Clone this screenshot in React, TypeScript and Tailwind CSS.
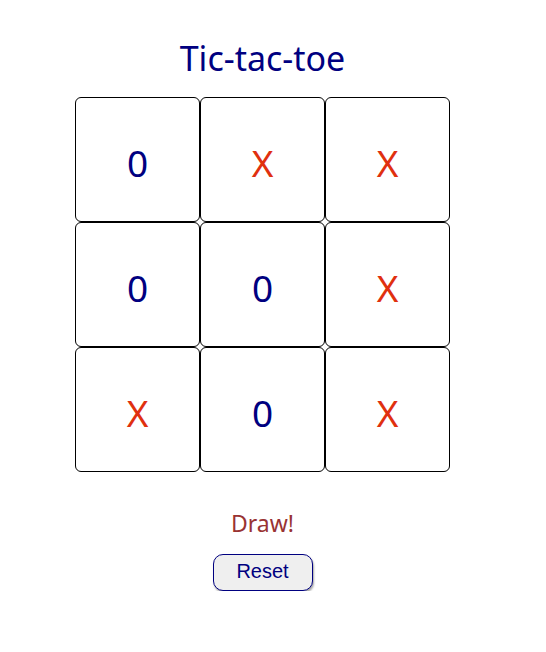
import { useState } from "react";

const start = ["0", "X", "X", "0", "0", "X", "X", "0", "X"];

function Cell({ value, onClick }: { value: string; onClick: () => void }) {
  return (
    <div
      onClick={onClick}
      className={`w-[125px] h-[125px] border border-black rounded-[6px] flex items-center justify-center pt-[5px] text-[37px] leading-none ${
        value === "X" ? "text-[#e0300f]" : "text-[#000080]"
      }`}
    >
      {value}
    </div>
  );
}

export default function App() {
  const [board, setBoard] = useState(start);

  return (
    <div className="w-[525px] flex flex-col items-center bg-white font-['Noto_Sans',sans-serif]">
      <h1 className="mt-[35px] text-[34px] leading-[46px] text-[#000080]">Tic-tac-toe</h1>
      <div className="mt-[16px] grid grid-cols-3">
        {board.map((v, i) => (
          <Cell key={i} value={v} onClick={() => {}} />
        ))}
      </div>
      <p className="mt-[35px] text-[23px] leading-[32px] text-[#993333]">Draw!</p>
      <button
        onClick={() => setBoard(Array(9).fill(""))}
        className="mt-[15px] w-[100px] h-[37px] pb-[3px] rounded-[10px] border border-[#000080] bg-[#efefef] text-[#000080] text-[20px] font-['Liberation_Sans',sans-serif] shadow-[1px_2px_2px_rgba(0,0,0,0.35)]"
      >
        Reset
      </button>
    </div>
  );
}
